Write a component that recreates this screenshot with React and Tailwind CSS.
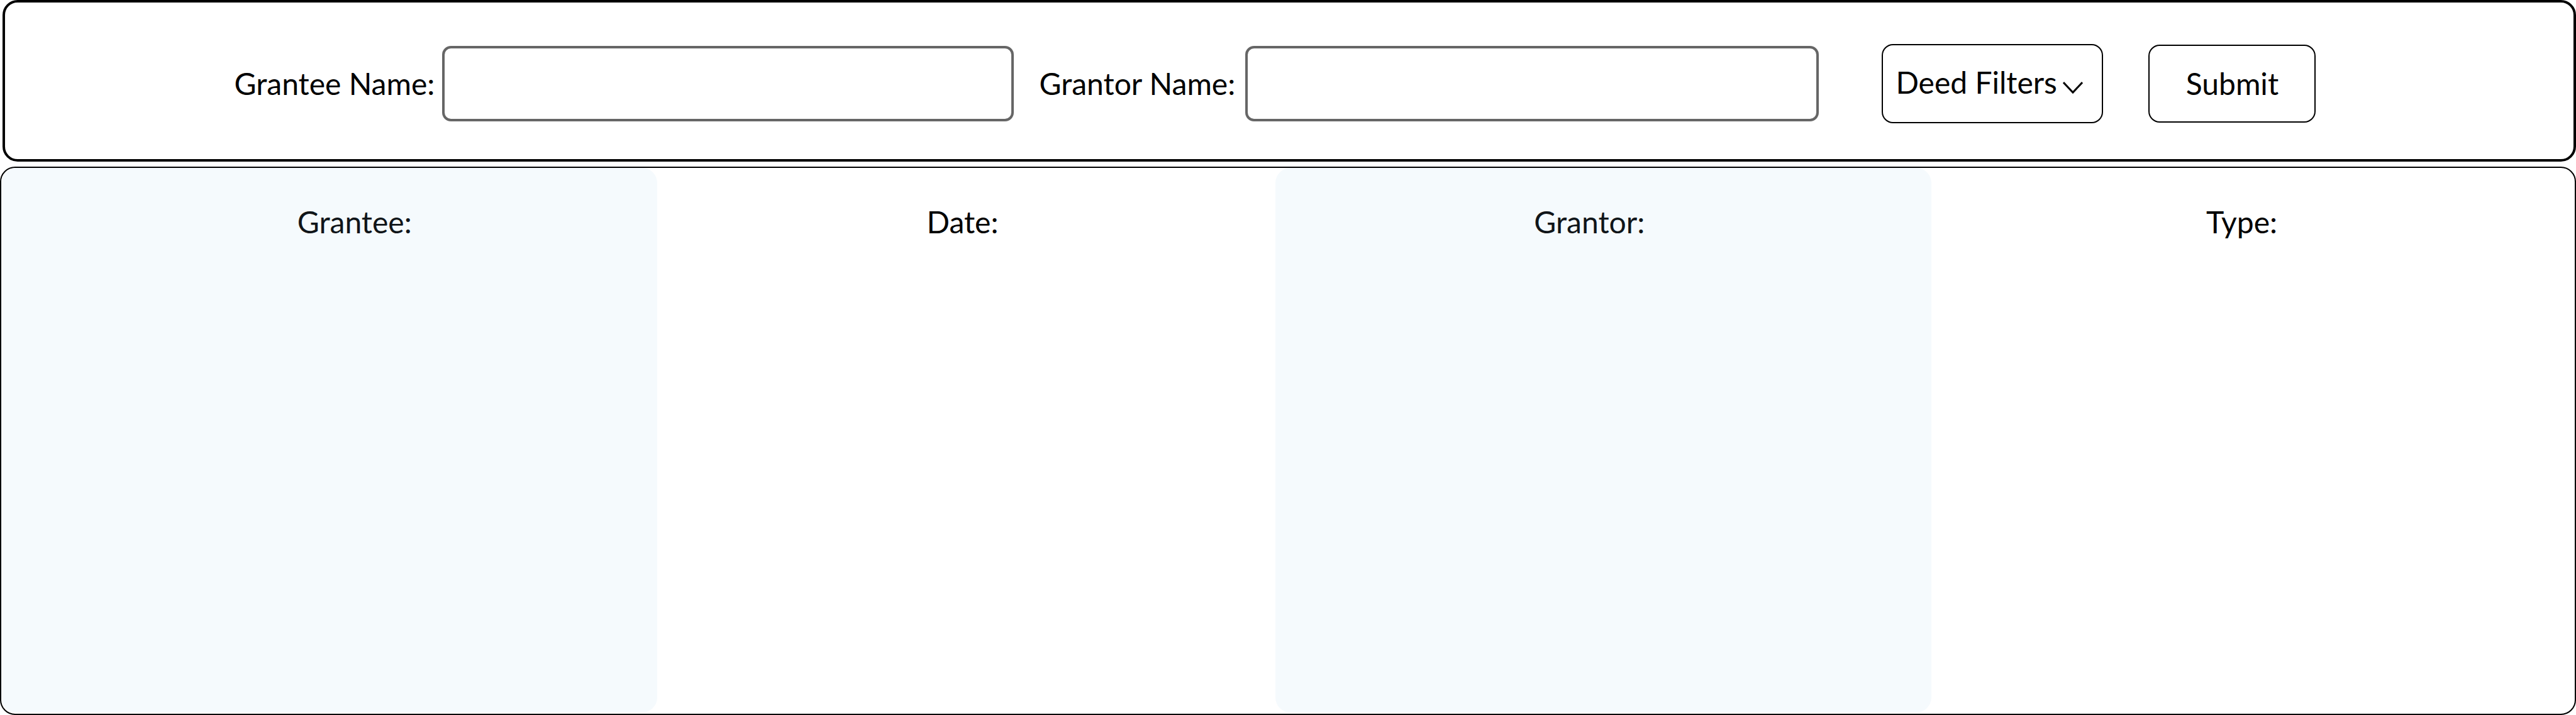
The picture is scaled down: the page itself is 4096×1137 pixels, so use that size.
import React from "react";

const columns = [
  { name: "Grantee:", head: "w-[25.5%] rounded-t-3xl bg-[#f5fafd] pl-20 text-[#101519]", body: "rounded-b-3xl bg-[#f5fafd]" },
  { name: "Date:", head: "w-[24%] pr-3 text-black", body: "" },
  { name: "Grantor:", head: "w-[25.5%] rounded-t-3xl bg-[#f5fafd] pr-11 text-[#101519]", body: "rounded-b-3xl bg-[#f5fafd]" },
  { name: "Type:", head: "w-[25%] pr-9 text-black", body: "" },
];

function Field({ id, label, gap }) {
  return (
    <div className={`flex flex-1 items-center ${gap}`}>
      <label htmlFor={id} className="whitespace-nowrap">
        {label}
      </label>
      <input
        id={id}
        type="text"
        className="h-[120px] min-w-0 flex-1 rounded-[14px] border-4 border-[#666666] bg-white px-6 outline-none"
      />
    </div>
  );
}

function DeedFilters() {
  return (
    <div className="relative ml-[100px] shrink-0">
      <select
        aria-label="Deed Filters"
        className="h-[126px] w-[352px] appearance-none rounded-[18px] border-2 border-black bg-white pb-1 pl-5 outline-none"
      >
        <option>Deed Filters</option>
      </select>
      <svg
        viewBox="0 0 32 20"
        className="pointer-events-none absolute top-[60px] right-8 h-5 w-8"
        fill="none"
        stroke="black"
        strokeWidth="3"
        aria-hidden="true"
      >
        <path d="M1 1 L16 17 L31 1" />
      </svg>
    </div>
  );
}

export default function App() {
  return (
    <div className="grid min-h-screen grid-rows-[auto_1fr] gap-2 bg-white font-['Lato',sans-serif] text-[48px] leading-[60px] text-black">
      <form
        onSubmit={(e) => e.preventDefault()}
        className="ml-1 flex items-center rounded-3xl border-4 border-black bg-white pt-[66px] pr-[10%] pb-[57px] pl-[8.9%]"
      >
        <div className="flex flex-1 items-center gap-10">
          <Field id="grantee" label="Grantee Name:" gap="gap-3" />
          <Field id="grantor" label="Grantor Name:" gap="gap-4" />
        </div>
        <DeedFilters />
        <button
          type="submit"
          className="ml-[72px] h-[124px] w-[266px] shrink-0 rounded-[18px] border-2 border-black bg-white"
        >
          Submit
        </button>
      </form>

      <table className="h-full w-full table-fixed border-separate border-spacing-0 rounded-3xl border-2 border-black pb-0.5">
        <thead>
          <tr>
            {columns.map((c) => (
              <th key={c.name} scope="col" className={`h-[172px] text-center font-normal ${c.head}`}>
                {c.name}
              </th>
            ))}
          </tr>
        </thead>
        <tbody>
          <tr className="h-full">
            {columns.map((c) => (
              <td key={c.name} className={c.body} />
            ))}
          </tr>
        </tbody>
      </table>
    </div>
  );
}
